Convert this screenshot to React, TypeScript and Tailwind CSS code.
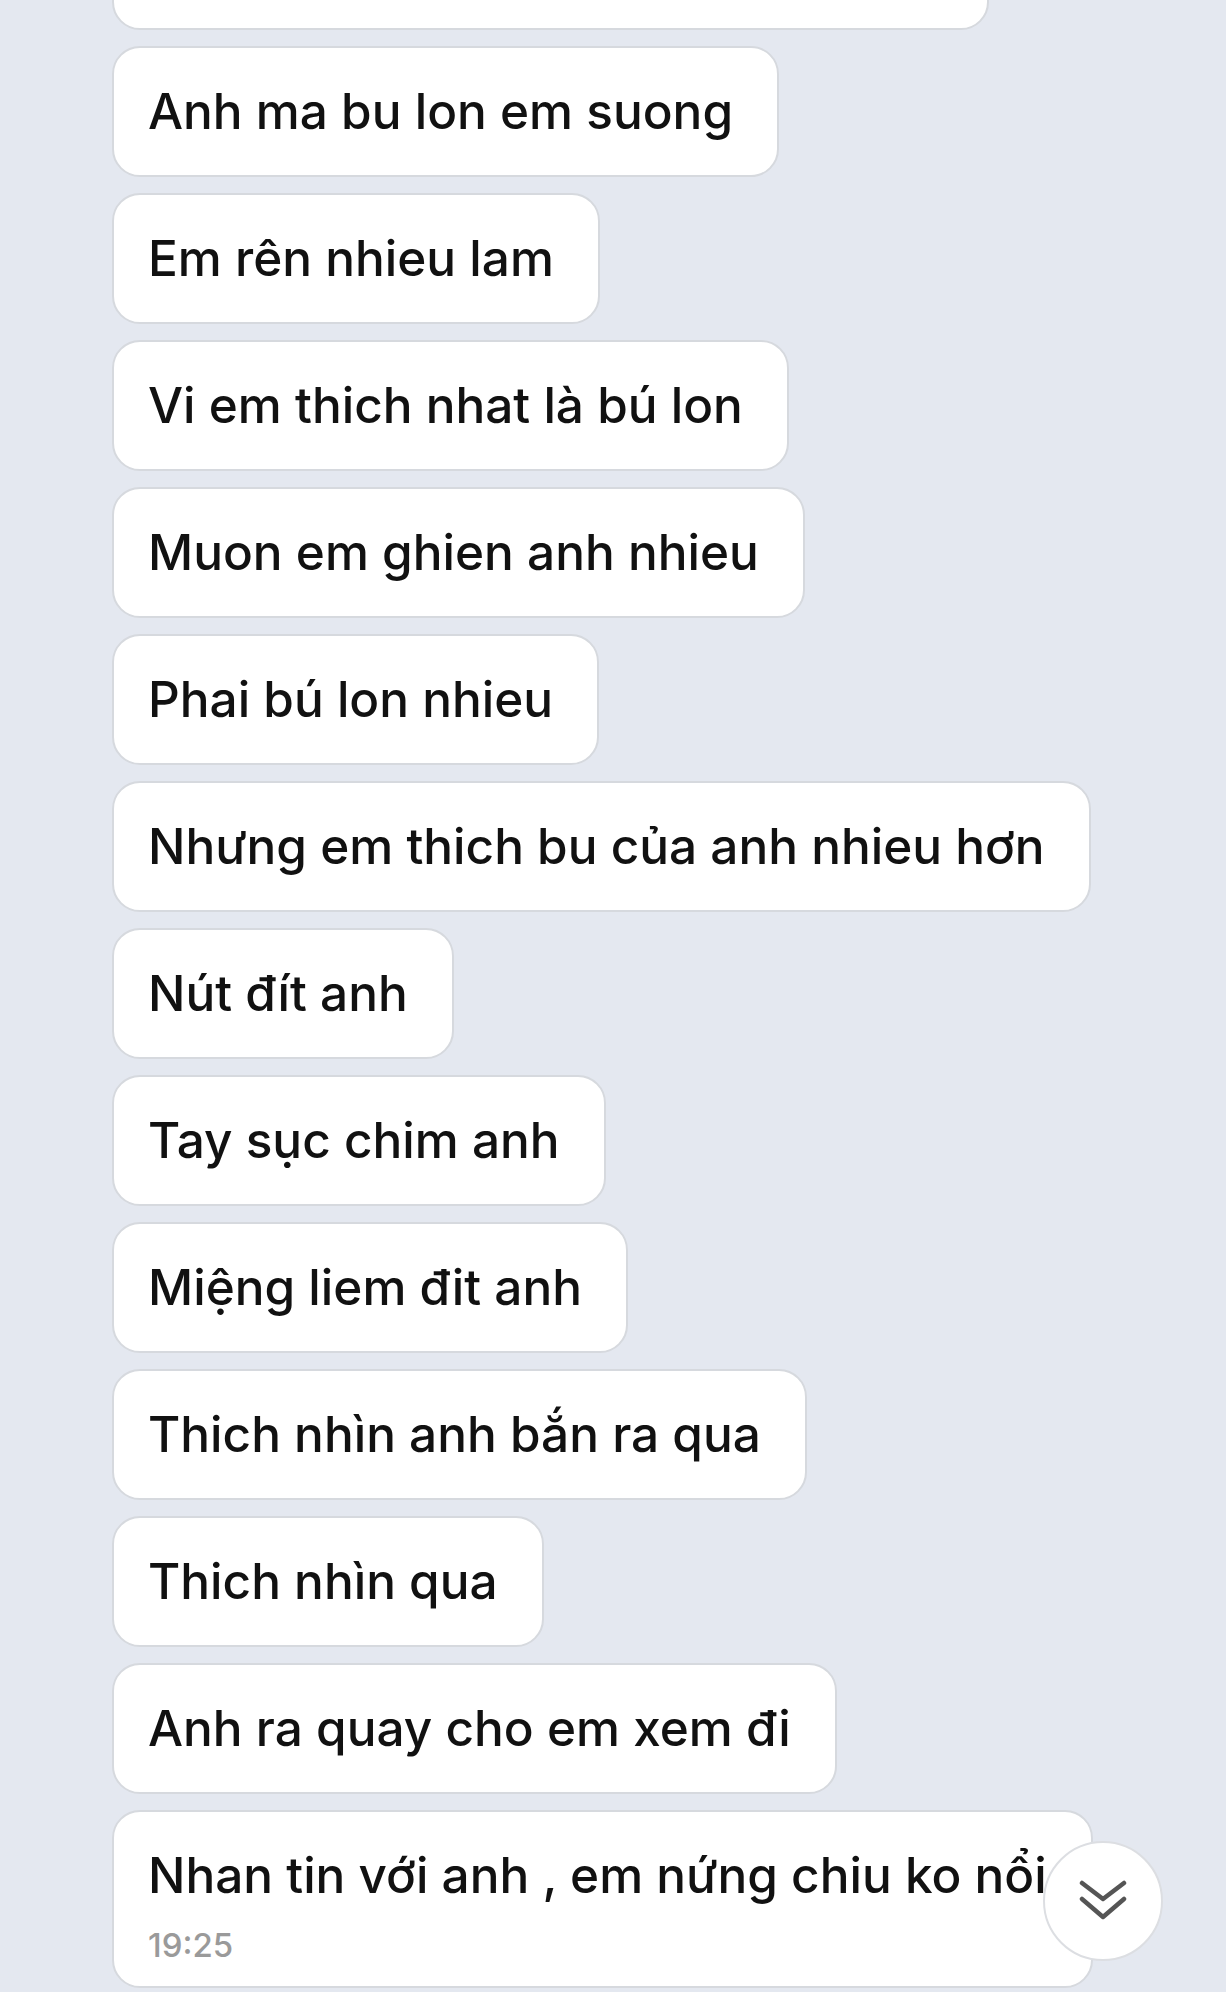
const messages = [
  "Anh ma bu lon em suong",
  "Em rên nhieu lam",
  "Vi em thich nhat là bú lon",
  "Muon em ghien anh nhieu",
  "Phai bú lon nhieu",
  "Nhưng em thich bu của anh nhieu hơn",
  "Nút đít anh",
  "Tay sục chim anh",
  "Miệng liem đit anh",
  "Thich nhìn anh bắn ra qua",
  "Thich nhìn qua",
  "Anh ra quay cho em xem đi",
];

function Bubble({ text }: { text: string }) {
  return (
    <div className="rounded-[28px] border-2 border-[#d6d9de] bg-white py-[34px] pl-[34px] pr-[44px] text-[49.5px] leading-[59px] font-medium text-[#111111] whitespace-nowrap">
      {text}
    </div>
  );
}

export default function App() {
  return (
    <div
      className="relative h-[1992px] w-[1226px] overflow-hidden bg-[#e4e8f0]"
      style={{ fontFamily: "Inter, 'Noto Sans', sans-serif" }}
    >
      <div className="flex flex-col items-start gap-4 pl-[112px]">
        {/* cut-off bubble at the top */}
        <div className="-mt-[101px] h-[131px] w-[877px] rounded-[28px] border-2 border-[#d6d9de] bg-white" />

        {messages.map((m, i) => (
          <Bubble key={i} text={m} />
        ))}

        <div className="rounded-[28px] border-2 border-[#d6d9de] bg-white pt-[34px] pb-[21px] pl-[34px] pr-[44px] whitespace-nowrap">
          <p className="text-[49.5px] leading-[59px] font-medium text-[#111111]">
            Nhan tin với anh , em nứng chiu ko nổi
          </p>
          <p className="mt-[20px] text-[33px] leading-[40px] font-medium text-[#9a9a9a]">19:25</p>
        </div>
      </div>

      {/* scroll to bottom button */}
      <button className="absolute left-[1043px] top-[1841px] flex h-[120px] w-[120px] items-center justify-center rounded-full border-2 border-[#dcdee2] bg-white">
        <svg width="48" height="44" viewBox="0 0 48 44" fill="none" stroke="#555555" strokeWidth="4.5" strokeLinecap="round" strokeLinejoin="round">
          <path d="M3 4 L24 20 L45 4" />
          <path d="M3 20 L24 38 L45 20" />
        </svg>
      </button>
    </div>
  );
}
